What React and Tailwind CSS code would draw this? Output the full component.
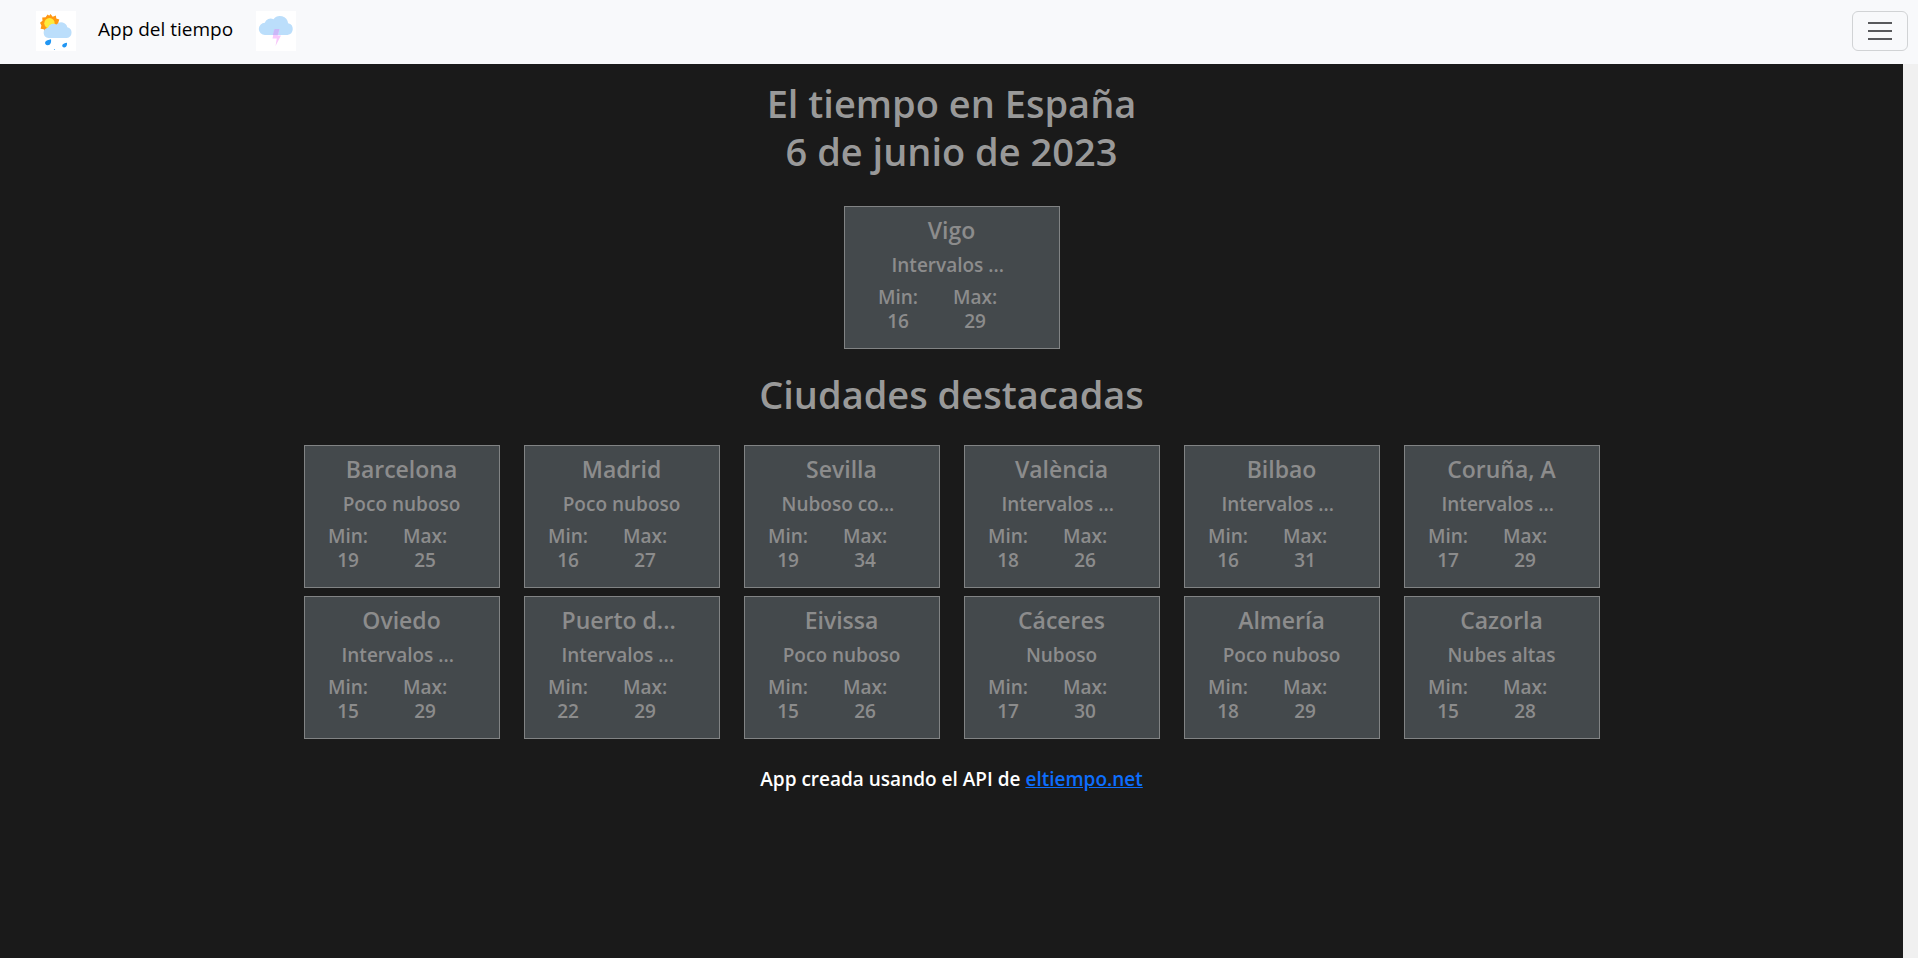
const featured = [
  { name: "Barcelona", sky: "Poco nuboso", min: 19, max: 25 },
  { name: "Madrid", sky: "Poco nuboso", min: 16, max: 27 },
  { name: "Sevilla", sky: "Nuboso co...", min: 19, max: 34 },
  { name: "València", sky: "Intervalos ...", min: 18, max: 26 },
  { name: "Bilbao", sky: "Intervalos ...", min: 16, max: 31 },
  { name: "Coruña, A", sky: "Intervalos ...", min: 17, max: 29 },
  { name: "Oviedo", sky: "Intervalos ...", min: 15, max: 29 },
  { name: "Puerto d...", sky: "Intervalos ...", min: 22, max: 29 },
  { name: "Eivissa", sky: "Poco nuboso", min: 15, max: 26 },
  { name: "Cáceres", sky: "Nuboso", min: 17, max: 30 },
  { name: "Almería", sky: "Poco nuboso", min: 18, max: 29 },
  { name: "Cazorla", sky: "Nubes altas", min: 15, max: 28 },
];

// Shortened labels start at the left edge of their box, full ones are centred.
const alignFor = (label) => (label.endsWith("...") ? "text-left" : "text-center");

function RainIcon() {
  return (
    <svg viewBox="0 0 40 40" className="size-10 bg-white" aria-hidden="true">
      <path
        fill="#ff9811"
        d="M14.5 3l2.2 2.7 3.2-1.2.4 3.1 3 .9-1 3 1.600 2.800-2.600 2L12 20.500l-3.400 1-.8-3.200-3.200-.6.8-3.200L4 11.700l2.500-2-.3-3.300 3.400-.2L11.600 3.500l1.600 1.200z"
      />
      <circle cx="13.500" cy="12.300" r="5.200" fill="#ffeb3b" />
      <path
        fill="#bbdefb"
        d="M12.500 27a5.200 5.200 0 0 1-.6-10.300A6 6 0 0 1 20.500 13.500a6.200 6.200 0 0 1 10.800 2.700A5.500 5.500 0 0 1 30.800 27z"
      />
      <path fill="#2196f3" d="M15 28.200c.4 3-.3 5.800-3.100 6-2 .1-3.300-1.500-2.700-3.200.7-1.900 3.400-2.200 5.800-2.800z" />
      <path fill="#2196f3" d="M31 31.800c.2 2.700-.5 4.600-2.600 4.700-1.500.1-2.500-1.100-2.100-2.400.5-1.500 2.700-1.800 4.700-2.300z" />
      <circle cx="18.500" cy="38.500" r=".6" fill="#5bb2f6" />
    </svg>
  );
}

function StormIcon() {
  return (
    <svg viewBox="0 0 40 40" className="size-10 bg-white" aria-hidden="true">
      <path
        fill="#bbdefb"
        d="M9 24a6.100 6.100 0 0 1-.2-12.200A6 6 0 0 1 17.500 8.200a8.200 8.200 0 0 1 14.600 4A6 6 0 0 1 31.500 24z"
      />
      <path fill="#f8c8fb" d="M18.500 18h5l-1.800 6.500h3.300L19.500 35l1.300-7.500h-4.300z" />
      <path fill="#c9b8f8" d="M18.500 18h5L21.800 24h-5z" />
    </svg>
  );
}

function CityCard({ city }) {
  return (
    <article className="border border-[#818384] bg-[#44494c] pt-[9px] pb-[15px] font-semibold text-[#8c8c8c]">
      <div className="mx-auto w-[194px]">
        <h2 className={`mx-auto mb-2 w-[120px] text-[23px]/[29px] whitespace-nowrap ${alignFor(city.name)}`}>
          {city.name}
        </h2>
        <p className={`mx-auto mb-2 w-[120px] text-[19px]/6 whitespace-nowrap ${alignFor(city.sky)}`}>{city.sky}</p>
        <dl className="flex pl-[5px] text-center text-[19px]/6">
          <div className="w-[77px]">
            <dt>Min:</dt>
            <dd>{city.min}</dd>
          </div>
          <div className="w-[77px]">
            <dt>Max:</dt>
            <dd>{city.max}</dd>
          </div>
        </dl>
      </div>
    </article>
  );
}

export default function App() {
  return (
    <div className="flex min-h-screen flex-col bg-[#1a1a1a] font-['Open_Sans','Noto_Sans',sans-serif]">
      <header className="flex h-16 items-start justify-between bg-[#f8f9fb] pt-[11px] pr-[10px] pl-9">
        <div className="flex items-start">
          <RainIcon />
          <a href="#inicio" className="mr-[23px] ml-[22px] text-[19px]/9 text-black">
            App del tiempo
          </a>
          <StormIcon />
        </div>
        <button
          type="button"
          aria-label="Abrir menú"
          className="flex h-10 w-14 items-center justify-center rounded-md border border-[#d1d3d5]"
        >
          <svg viewBox="0 0 24 18" className="h-[18px] w-6" stroke="#58595c" strokeWidth="2" aria-hidden="true">
            <path d="M0 1h24M0 9h24M0 17h24" />
          </svg>
        </button>
      </header>
      <div className="flex flex-1">
        <main className="flex min-w-0 flex-1 flex-col items-center pt-[15px]">
          <h1 className="mb-[31px] text-center text-[38px]/12 font-semibold text-[#999]">
            El tiempo en España
            <br />6 de junio de 2023
          </h1>
          <div className="w-[216px]">
            <CityCard city={{ name: "Vigo", sky: "Intervalos ...", min: 16, max: 29 }} />
          </div>
          <h1 className="mt-[21px] mb-[27px] text-center text-[38px]/12 font-semibold text-[#999]">
            Ciudades destacadas
          </h1>
          <section className="grid w-full max-w-[1320px] grid-cols-6 gap-x-6 gap-y-2 px-3">
            {featured.map((city) => (
              <CityCard key={city.name} city={city} />
            ))}
          </section>
          <footer className="mt-7 text-[19px]/6 font-semibold text-white">
            App creada usando el API de{" "}
            <a href="#eltiempo" className="text-[#0d6efd] underline">
              eltiempo.net
            </a>
          </footer>
        </main>
        <div className="w-[15px] bg-[#f0f0f0]" />
      </div>
    </div>
  );
}
